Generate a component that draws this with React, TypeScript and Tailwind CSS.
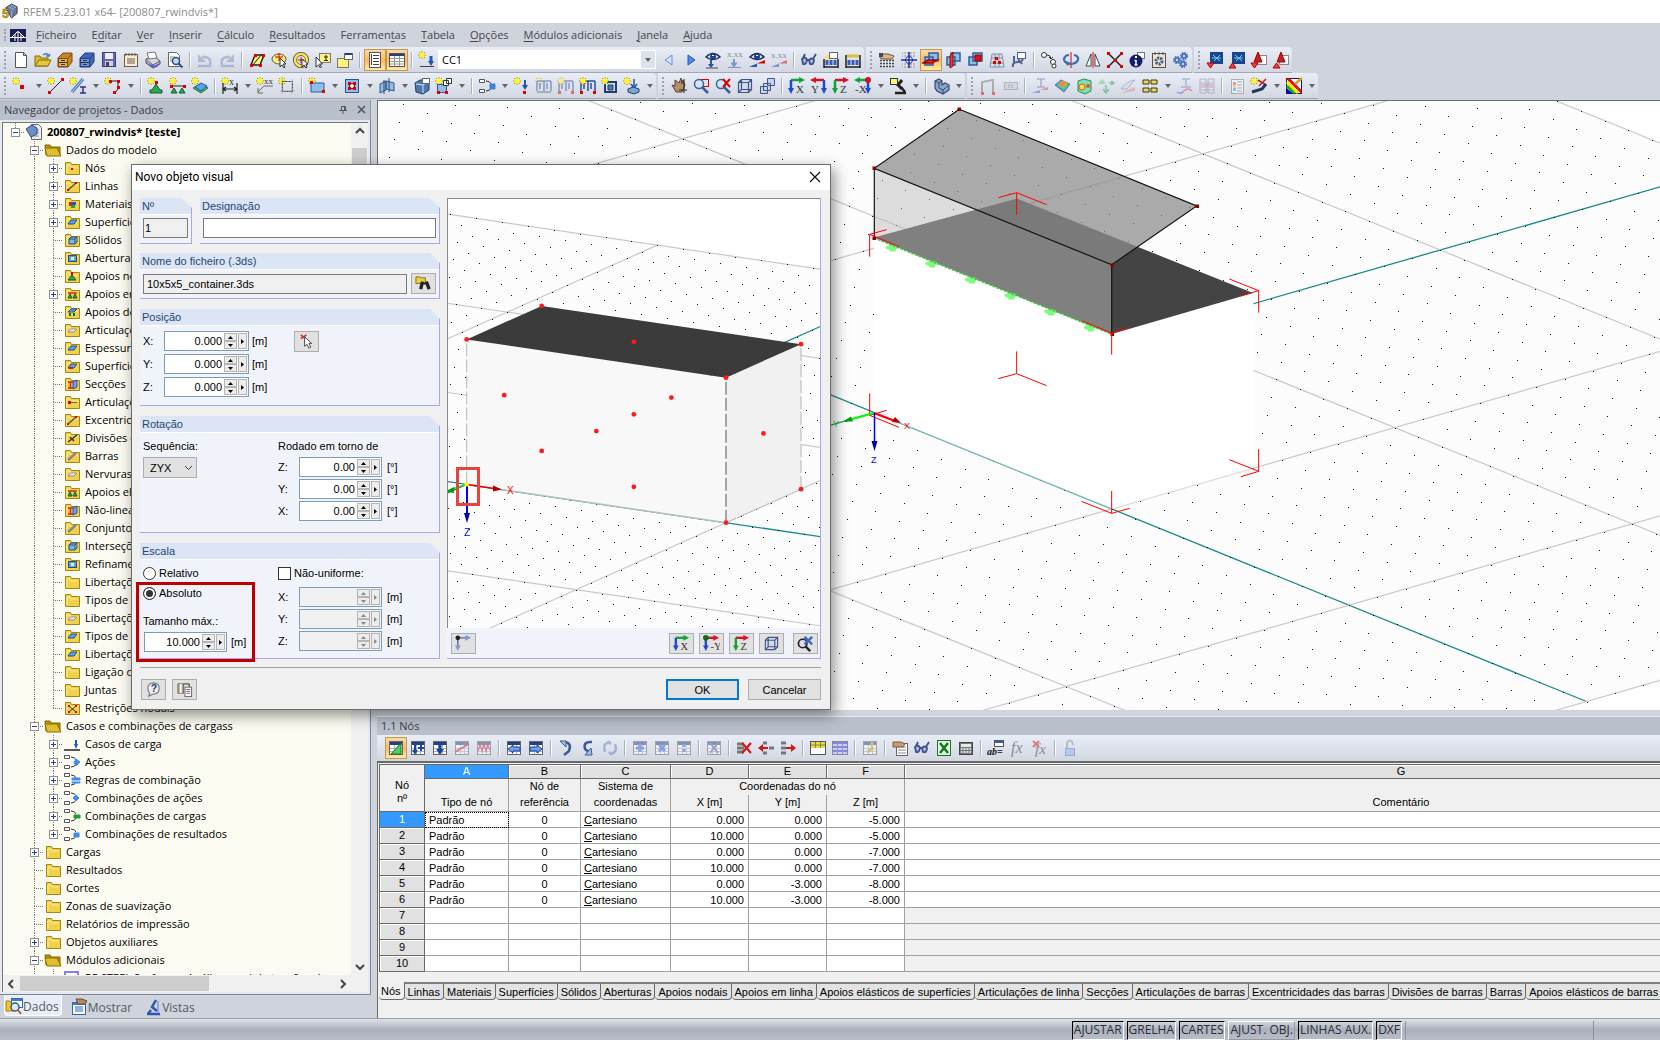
import { useState } from 'react';
import type { ReactNode } from 'react';

/* ---------- drawing helpers for the small icons (18 x 18) ---------- */

const s = (d: string, c = '#444', w = 1, f = 'none') => <path d={d} stroke={c} strokeWidth={w} fill={f} />;
const r = (x: number, y: number, w: number, h: number, f: string, c = 'none') => (
  <rect x={x} y={y} width={w} height={h} fill={f} stroke={c} />
);
const red = (x: number, y: number) => <rect x={x} y={y} width="3" height="3" fill="#e00000" />;
const star = (
  <>
    <path d="M4 0v8M0 4h8M1 1l6 6M7 1L1 7" stroke="#a39400" strokeWidth="1" />
    <path d="M4 1v6M1 4h6M2 2l4 4M6 2L2 6" stroke="#fff22e" strokeWidth="1.500" />
  </>
);
const label = (t: string, x: number, y: number, size = 10, c = '#333') => (
  <text x={x} y={y} fontSize={size} fill={c} fontFamily="'Liberation Serif', serif">{t}</text>
);
const eye = (
  <>
    {s('M2 6Q9 -1 16 6Q9 11 2 6z', '#1c2c55', 1.5, '#dce8fa')}
    <circle cx="9" cy="5.500" r="3" fill="#1f3f94" />
    {r(8, 4, 2, 1, '#fff')}
  </>
);
const glasses = (
  <>
    {s('M2 8q4-3 5 1q-1 5-4 4zM9 9q3-3 5 0q0 5-4 4zM7 9h2M3 7l2-4M13 8l3-5', '#3c5288', 1.8, '#a9bfe6')}
  </>
);
const sheet = (
  <>
    {r(2.5, 2.5, 13, 13, '#fff', '#666')}
    {r(3, 3, 12, 3, '#24407e')}
    {s('M3 9.500h12M3 12.500h12M7.500 6v9M11.500 6v9', '#aab2c0')}
  </>
);
const cabinet = (a: string, b: string, c: string) => (
  <>
    {s('M2 7l5-5h9v9l-4 5H2z', c, 1, b)}
    {s('M2.500 7.500h9v8h-9zM11.500 7.500L16 3', c, 1, a)}
    {s('M5 9.500h4M5 13.500h4M3 11.500h8', '#333')}
  </>
);
const axes = (h: string, v: string, name: string) => (
  <>
    {s('M3 3h9', h, 2.5)}
    {s('M11 0l6 3l-6 3z', h, 0, h)}
    {s('M3 3v10', v, 2.5)}
    {s('M0 11l3 6l3-6z', v, 0, v)}
    {label(name, 8, 16, 11)}
  </>
);
const axesLeft = (h: string, v: string, name: string) => (
  <>
    {s('M14 3H5', h, 2.5)}
    {s('M6 0L0 3l6 3z', h, 0, h)}
    {s('M14 3v10', v, 2.5)}
    {s('M11 11l3 6l3-6z', v, 0, v)}
    {label(name, 1, 16, 11)}
  </>
);
const plane = (
  <>
    {s('M3 6h8v8H3zM7 2h9v8H7z', '#2d5f9e', 1.5, '#8fbde8')}
  </>
);
const comb = (f: string, d: string) => (
  <>
    {s('M1.500 2.500h5v3h-5zM1.500 12.500h5v3h-5z', '#555', 1, '#fff')}
    {s('M8 4q4 0 5 3M8 14q4 0 5-3', '#333', 1)}
    {s(d, f, 1, f)}
  </>
);
const beams = s('M2 4v10M9 4v10M16 4v10M2 4h14M5 6v6M12 6v6', '#2c4fa0', 1.5);

const icons: Record<string, ReactNode> = {
  new: s('M3.500 1.500h8l3 3v12h-11zM11.500 1.500v3h3', '#555', 1, '#fff'),
  open: <>{s('M1 15V5h5l1 2h7v8z', '#8a7100', 1, '#d9b92d')}{s('M1 15l4-6h12l-3 6z', '#8a7100', 1, '#e3c63f')}{s('M9 4q4-3 6 1l1-2M15 5h-3', '#4b7cc0', 1.5)}</>,
  cab: cabinet('#f0b050', '#c98424', '#7b4d10'),
  cabBlue: cabinet('#6f97de', '#3f66b6', '#213e80'),
  save: <>{r(2.5, 1.5, 13, 14, '#6666b4', '#3d3d80')}{r(5, 2, 8, 6, '#eef')}{r(5, 10, 8, 5, '#d0d0de')}{r(6, 11, 3, 4, '#444')}</>,
  notes: <>{r(2.5, 3.5, 13, 12, '#f6eedb', '#6d5c46')}{s('M4 2v3M7 2v3M10 2v3M13 2v3M5 8h8M5 10h8M5 12h8', '#6d5c46')}</>,
  print: <>{s('M2 8l9-2l5 4l-7 4z', '#555', 1, '#d5d8e2')}{s('M5 8L3 2l8-1l2 6z', '#777', 1, '#fff')}{s('M2 8v4l7 5v-3M9 17l7-4v-3', '#555', 1, '#9da3b8')}{s('M6 14l4 2l4-2', '#5b5bd0', 2)}</>,
  preview: <>{s('M2.500 1.500h8l3 3v11h-11z', '#666', 1, '#fff')}{s('M4 6h5M4 8h4M4 10h3', '#888')}<circle cx="10" cy="10" r="3.500" fill="#bcdcf8" stroke="#30507e" strokeWidth="1.500" />{s('M12.500 12.500l4 4', '#30507e', 2)}</>,
  undo: <>{s('M6 6q10-1 8 8M2 15h13', '#7f93b6', 2.5)}{s('M2 3v8h8z', '#7f93b6', 0, '#7f93b6')}</>,
  redo: <>{s('M12 6q-10-1-8 8M3 15h13', '#7f93b6', 2.5)}{s('M16 3v8H8z', '#7f93b6', 0, '#7f93b6')}</>,
  selPoly: <>{s('M3 14L7 4h9l-4 10z', '#222', 1.5, '#fff27a')}{s('M4 15L14 3', '#222')}{red(2, 13)}{red(6, 3)}{red(14, 3)}{red(11, 13)}</>,
  selOval: <><ellipse cx="9" cy="8" rx="7" ry="5" fill="#fff27a" stroke="#555" />{s('M9 2v8M5 6h8', '#e00000')}{s('M10 7v9l2-2l2 3l1-1l-2-3h3z', '#333', 1, '#fff')}</>,
  selRing: <><circle cx="9" cy="9" r="6" fill="none" stroke="#444" strokeWidth="4" /><circle cx="9" cy="9" r="6" fill="none" stroke="#ffe34a" strokeWidth="2.500" />{s('M9 6v6M6 9h6', '#e00000')}{s('M10 8v8l2-2l2 3l1-1l-1-3h2z', '#333', 1, '#fff')}</>,
  selPlus: <>{r(5.5, 2.5, 11, 9, '#fff27a', '#777')}{s('M12 4v5M10 6h4M10 9.500h4', '#222')}{s('M2 6v10l2.500-2l2 3l1-1l-2-3h3z', '#333', 1, '#fff')}</>,
  note: <>{r(1.5, 7.5, 11, 9, '#fff27a', '#777')}{r(8.5, 2.5, 8, 6, '#fff', '#666')}{r(9, 2, 7, 2, '#24407e')}</>,
  nav: <>{r(3.5, 1.5, 11, 15, '#fff', '#555')}{s('M5.500 3v11M7 4.500h6M7 7.500h6M7 10.500h6M7 13.500h6', '#444')}</>,
  table: <>{r(1.5, 2.5, 15, 13, '#fff', '#555')}{r(2, 3, 14, 2, '#24407e')}{s('M2 7.500h14M2 10.500h14M2 13h14M6.500 5v10M11.500 5v10', '#999')}</>,
  load: <>{star}{s('M2 15.500h14', '#444')}{s('M13 5v6', '#2456b0', 3)}{s('M10 10l3 5l3-5z', '#2456b0', 0, '#2456b0')}</>,
  prev: s('M12 4L5 9l7 5z', '#6d90cc', 1, '#cfe0fa'),
  next: s('M6 4l7 5l-7 5z', '#1e5ac0', 1, '#4d8bea'),
  eyeLoad: <>{eye}{s('M7 9v5', '#2456b0', 2)}{s('M4 13l3 4l3-4z', '#2456b0', 0, '#2456b0')}{s('M2 17h12')}</>,
  valLoad: <>{label('x.xx', 1, 6, 9)}{s('M8 8v5', '#2456b0', 2)}{s('M5 12l3 4l3-4zM2 16.500h13', '#2456b0', 1, '#2456b0')}</>,
  eyeRes: <>{eye}{s('M1 16L9 12.500V16z', '#2456b0', 0, '#2456b0')}{s('M9 12.500L17 9v3.500z', '#e00000', 0, '#e00000')}</>,
  valRes: <>{label('x.xx', 1, 7, 9)}{s('M1 16L9 12.500V16z', '#2456b0', 0, '#2456b0')}{s('M9 12.500L17 9v3.500z', '#e00000', 0, '#e00000')}</>,
  glasses,
  film: <>{r(7.5, 1.5, 8, 6, '#fff', '#666')}{s('M2 8v9M16 8v9M2 16h14', '#222', 1.5)}{s('M5 9v5M9 9v5M13 9v5', '#3a5fb0', 3)}{s('M3 6h4', '#ffe34a', 3)}</>,
  film2: <>{s('M2 4v13M16 4v13M2 16h14', '#222', 1.5)}{s('M5 9v5M9 9v5M13 9v5', '#3a5fb0', 3)}{s('M3 5h12', '#d8c23a', 3)}</>,
  hand: <>{s('M2 9.500h14M2 12.500h14M2 15.500h14', '#444', 1.5)}{s('M4.500 9v8M7.500 9v8M10.500 9v8M13.500 9v8', '#e2e6ef', 1)}{s('M2 3h8l6 2l-2 3H6L2 7z', '#7d5b3b', 1, '#d9b391')}{r(1, 2, 4, 4, '#4a4a55')}</>,
  snap: <>{s('M2 2h14M2 5h14M2 13h14M2 16h14', '#777', 1)}{s('M3.500 1v16M6.500 1v16M12.500 1v16M15.500 1v16', '#e2e6ef', 1.5)}<circle cx="9" cy="9" r="3.500" fill="#fff" stroke="#1d2fa8" />{s('M9 1v16M1 9h16', '#1d2fa8', 1.5)}</>,
  planeXY: <>{plane}{s('M1 12l5-3h9l-5 3z', '#a00000', 1.5, '#e04030')}</>,
  planeYZ: <>{plane}{s('M9 1v14l-3 2V5z', '#a00000', 1, '#e04030')}</>,
  planeXZ: <>{plane}{s('M9 4h6v6H9z', '#a00000', 1, '#e01010')}</>,
  mesh: <>{s('M4 3h10l2 13H2zM3 7h12M2 12h14M7 3v13M11 3v13', '#7a93ab', 1, '#d6e2ee')}{red(7, 6)}{red(5, 10)}{red(10, 10)}</>,
  tools: <>{s('M3 16q-1-5 5-5t4-5', '#4d6189', 2)}{s('M4 5v6M8 8l4 5', '#4d6189', 2)}{r(7.5, 1.5, 8, 6, '#fff', '#4d6189')}</>,
  move: <><circle cx="4" cy="4" r="2.500" fill="#fff" stroke="#333" /><circle cx="13" cy="11" r="2.500" fill="#fff" stroke="#333" /><circle cx="14" cy="15" r="2" fill="#fff" stroke="#333" />{s('M7 4q4 0 4 4M9 6l2 2l2-2', '#333')}</>,
  rotate: <>{s('M9 1v16', '#e00000')}{s('M12 4q5 1 4 5q-2 4-8 4q-6-1-6-5q1-4 5-4', '#3b6db4', 2.2)}{s('M5 15l4-3l-5-2z', '#3b6db4', 0, '#3b6db4')}</>,
  mirror: <>{s('M9 1v16', '#e00000')}{s('M7 3v12H2zM11 3v12h5z', '#444', 1, '#fff')}</>,
  cross: <>{s('M3 3l12 12M15 3L3 15', '#222', 1.5)}{red(1, 1)}{red(14, 1)}{red(1, 14)}{red(14, 14)}{red(8, 8)}</>,
  info: <>{r(9.5, 1.5, 7, 6, '#fff', '#777')}<circle cx="8" cy="10" r="6.500" fill="#111d68" />{s('M8 9v5M6.500 9.500h2M6.500 14h3', '#fff', 1.5)}{r(7, 5, 2, 2, '#fff')}</>,
  gearBox: <>{r(2.5, 2.5, 13, 14, '#efe3cc', '#555')}{s('M5 1v3M9 1v3M13 1v3', '#555')}<circle cx="9" cy="10" r="3" fill="none" stroke="#35588f" strokeWidth="3" strokeDasharray="2 1" /></>,
  gears: (
    <>
      {[[5, 9], [12, 5], [11, 13]].map(([x, y]) => (
        <g key={y}>
          <circle cx={x} cy={y} r="3" fill="none" stroke="#466db5" strokeWidth="2" strokeDasharray="1.500 0.850" />
          <circle cx={x} cy={y} r="2" fill="#c8d6f0" stroke="#466db5" strokeWidth="1.500" />
        </g>
      ))}
    </>
  ),
  dxfIn: <>{r(4, 1, 13, 12, '#16468c')}{s('M7 4l7 6M14 4l-6 6M6 7h9', '#7fd0f2')}{s('M1 12h7l-3.500 5z', '#b00000', 1, '#f04040')}</>,
  dxfOut: <>{r(4, 1, 13, 12, '#16468c')}{s('M7 4l7 6M14 4l-6 6M6 7h9', '#7fd0f2')}{s('M1 17h7l-3.500-5z', '#b00000', 1, '#f04040')}</>,
  pdfIn: <>{r(7.5, 4.5, 9, 9, '#fff', '#888')}{s('M8 1l4 10H4z', '#a00000', 1, '#c81e1e')}{s('M1 12h7l-3.500 5z', '#b00000', 1, '#f04040')}</>,
  pdfOut: <>{r(7.5, 4.5, 9, 9, '#fff', '#888')}{s('M9 1l4 10H5z', '#a00000', 1, '#c81e1e')}{s('M1 17h7l-3.500-5z', '#b00000', 1, '#f04040')}</>,

  node: <>{star}{r(8, 8, 4, 4, '#e00000')}</>,
  line: <>{star}{s('M3 15L15 3', '#222')}{red(1, 14)}{red(14, 1)}</>,
  member: <>{star}{s('M3 15L14 2', '#3973bd', 3)}{s('M3 15L14 2', '#cfe3fa', 1)}{s('M11 10h6M14 10v6M11 16h6', '#33337e', 1.5)}</>,
  poly: <>{star}{s('M6 4h8v8l-3 4', '#222')}{red(5, 3)}{red(13, 3)}{red(13, 9)}{red(9, 14)}</>,
  support: <>{star}{s('M9 7l4 6h2v3H3v-3h2z', '#12612a', 1, '#2ea650')}{red(8, 4)}</>,
  lineSupport: <>{star}{s('M3 9h13', '#222')}{red(1, 8)}{red(14, 8)}{s('M5 11l3 5H2zM13 11l3 5h-6z', '#12612a', 1, '#2ea650')}</>,
  surfSupport: <>{star}{s('M2 11l7-4l8 4l-7 5z', '#1c7b35', 1, '#3cc060')}{s('M4 10l6-4l6 3l-6 5z', '#1b57a0', 1, '#5aa2ee')}</>,
  dim: <>{star}{s('M2 6v11M16 6v11M2 12h14M5 10l-3 2l3 2M13 10l3 2l-3 2', '#222', 1.2)}{label('x', 8, 8, 10)}</>,
  dimXX: <>{star}{label('xx', 8, 7, 9)}{s('M2 15L8 9h9M2 11v5h5', '#666')}</>,
  frame: <>{star}<rect x="4.500" y="4.500" width="10" height="10" fill="none" stroke="#333" strokeDasharray="2 1" />{s('M4 2v15M14 2v15M2 14h15', '#888', 0.5)}</>,
  surface: <>{star}{s('M3 6h13v9H3z', '#2d5f9e', 1, '#8fbde8')}{red(2, 4)}{red(14, 13)}</>,
  opening: <>{r(2.5, 2.5, 13, 13, '#8fbde8', '#35537f')}{r(6.5, 6.5, 5, 5, '#dce6f2', '#333')}{red(5, 5)}{red(10, 5)}{red(5, 10)}{red(10, 10)}</>,
  inter: <>{s('M2 7l6-3v9l-6 3zM8 4l8 2v8l-8-2z', '#35537f', 1, '#8fbde8')}{s('M11 1v14M6 3v14', '#2a4a78')}</>,
  solid: <>{s('M2 6l5-3h9v10l-6 4l-7-2z', '#213e68', 1, '#4d78ae')}{s('M3 7l7 1v8M10 8l6-4', '#cfe3fa')}{r(9.5, 1.5, 7, 5, '#fff', '#666')}</>,
  solidNew: <>{star}{r(2.5, 7.5, 9, 8, '#8fbde8', '#2d5f9e')}{s('M8.500 3.500h5v5h-5zM11.500 1.500h5v5h-5z', '#333', 1, '#fff')}{red(2, 14)}{red(10, 14)}</>,
  combo: comb('#3a84dc', 'M12 7h5v5h-5z'),
  nodeLoad: <>{star}{s('M12 3v7', '#2456b0', 2)}{s('M9 8l3 5l3-5z', '#2456b0', 0, '#2456b0')}{red(10, 14)}</>,
  memLoad: <>{star}{beams}{s('M2 15h14', '#222')}</>,
  surfLoad: <>{beams}{star}{red(1, 14)}{red(14, 14)}</>,
  solidLoad: <>{s('M4 5h11v10H4z', '#213e68', 2, '#cfe3fa')}{s('M7 8h5v5H7z', '#213e68', 1, '#4d78ae')}{star}</>,
  genLoad: <>{star}{s('M11 2v7M8 7l3 4l3-4', '#2456b0', 1.5)}{s('M5 12l5-2l6 2v3l-5 2l-6-2z', '#213e68', 1, '#7ba6da')}</>,
  pan: <>{s('M5 3v6l-3-1l4 7h6l3-7l-2-5l-1 4l-1-6l-2 5z', '#59402c', 1, '#b58e6b')}{s('M14 2v14M9 13h8', '#222')}</>,
  zoomWin: <>{r(8.5, 2.5, 8, 7, 'none', '#e00000')}<circle cx="7" cy="7" r="4.500" fill="#d3e6fb" stroke="#3a5d9e" strokeWidth="1.500" />{s('M10 10l6 6', '#3a5d9e', 2.5)}</>,
  zoomDel: <><circle cx="7" cy="7" r="4.500" fill="#d3e6fb" stroke="#3a5d9e" strokeWidth="1.500" />{s('M10 10l6 6', '#3a5d9e', 2.5)}{s('M9 2l7 8M16 2L9 10', '#e00000', 2)}</>,
  box: <>{s('M2.500 5.500h10v10h-10zM5.500 2.500h10v10h-10zM2.500 5.500l3-3M12.500 5.500l3-3M12.500 15.500l3-3M2.500 15.500l3-3', '#3f5489', 1.2, '#c5d3ec77')}</>,
  boxes: <>{s('M2.500 9.500h7v7h-7zM5.500 6.500h7v7h-7zM9.500 1.500h7v7h-7z', '#3f5489', 1, '#c5d3ec')}</>,
  ax: axes('#12a23a', '#2348d0', 'X'),
  ay: axesLeft('#d81224', '#2348d0', 'Y'),
  ay2: <>{axes('#d81224', '#2348d0', '-Y')}<circle cx="3" cy="3" r="3" fill="#0f6a20" /></>,
  az: axes('#d81224', '#12a23a', 'Z'),
  anx: <>{axesLeft('#12a23a', '#2348d0', '-X')}<circle cx="14" cy="3" r="3" fill="#d81224" /></>,
  view: <>{s('M13 3l-4 5l4 4', '#222', 3)}{s('M6 16h11M12 10l4 5', '#222', 2.5)}{r(1.5, 1.5, 7, 6, '#fff27a', '#333')}</>,
  shape: <>{s('M3 4l4-2l3 2v4l3-2l4 2v5l-6 4l-6-3l-2-3z', '#34496e', 1.2, '#8ba7cd')}{s('M3 4l4 2v5l4 2v4M7 6l3-2M11 13l5-4', '#34496e')}</>,
  deform: <>{s('M3 16V5l11-2v13', '#777', 2)}{red(2, 15)}{red(13, 15)}</>,
  tag: <>{r(3.5, 5.5, 13, 7, '#ccc', '#888')}{s('M8 7v4M11 7v4', '#777')}</>,
  secForce: <>{s('M6 2h8M10 2v8M6 10h8', '#6b7fb5', 1.5)}{s('M1 16L9 13v3z', '#4a63d0', 0, '#4a63d0')}{s('M9 13l8-3v3z', '#e05050', 0, '#e05050')}</>,
  rainbow: <>{s('M2 8l6-5l9 4l-6 8z', '#6a6ad0', 1, '#5a9af0')}{s('M4 8l5-4l7 3l-5 6z', '#40c060', 1, '#60d070')}{s('M6 7l4-3l4 2l-4 4z', '#f0a030', 1, '#f08050')}</>,
  iso: <>{s('M3 4l6-2l7 2v10l-6 3l-7-3z', '#2a8e5a', 1, '#7be0b4')}<circle cx="7" cy="10" r="3" fill="#f3e14a" stroke="#e05a2a" /><circle cx="13" cy="9" r="2" fill="#e05a2a" /></>,
  react: <>{s('M9 8v8M6 12l3 4l3-4M12 6h5M14 4l3 2l-3 2', '#35a04a', 1.5)}{s('M5 2l4 5H1z', '#35a04a', 0, '#6fce80')}</>,
  section: <>{s('M2 12Q8 4 16 3l-8 9z', '#8090ad', 1, '#cfdaee')}{s('M2 16l14-6v4z', '#c04848', 0, '#e88a8a')}</>,
  keys: <>{s('M2 3h6v4H2zM10 3h6v4h-6zM2 11h6v4H2zM10 11h6v4h-6z', '#3e3500', 1, '#e8d86a')}</>,
  curve: <>{s('M6 2h8M10 2v8M5 10h10', '#7a8cc0', 1.5)}{s('M1 15q4 3 7-1', '#5a5ad8', 1.5)}{s('M8 14q4-4 8 0', '#d84a5a', 1.5)}</>,
  grid: <>{s('M2 2h6v14H2zM10 2h6v14h-6zM2 6h14M2 10h14M2 13h14', '#8a8a98', 1, '#dfe0ff')}{s('M3 8h12', '#e04a4a')}</>,
  report: <>{r(3.5, 2.5, 12, 14, '#fff', '#777')}{s('M9 5h5M9 8h5M9 11h5M9 14h5', '#777')}{r(5, 5, 3, 3, '#e05050')}{r(5, 8, 3, 3, '#e8d040')}{r(5, 11, 3, 3, '#40a0e0')}</>,
  wand: <>{star}{s('M8 3l8 5M16 2L9 9', '#c02020', 1.5)}{s('M2 15l10-3l4-5', '#22375e', 3)}</>,
  colors: <>{r(1.5, 1.5, 15, 15, '#f4f4ff', '#222')}{s('M2 12v4h5z', '#0000e0', 1, '#0000e0')}{s('M2 9l8 7', '#10b020', 3)}{s('M2 5l11 11', '#ffe800', 3)}{s('M2 2h3l11 11v3z', '#e81010', 1, '#e81010')}{s('M10 7l7-6', '#d8a030', 2.5)}</>,

  tEdit: <>{sheet}{s('M14 4v11H4z', '#0e7a22', 1, '#4ccf62')}</>,
  tPlus: <>{sheet}{s('M6 4v9M4 11l2 3l2-3M12 6v6M9 9h6', '#17459e', 2)}</>,
  tDown: <>{sheet}{s('M9 3v9', '#17459e', 3)}{s('M5 10l4 6l4-6z', '#17459e', 0, '#17459e')}</>,
  tRes: <>{sheet}{s('M2 13L16 5', '#d81224', 2)}</>,
  tWave: <>{sheet}{s('M3 12l2-6l2 6l2-7l2 7l2-6l2 5', '#d81224', 1.2)}</>,
  tPrev: <>{sheet}{s('M3 10l5-4v2h7v4H8v2z', '#17459e', 1, '#6f9dea')}</>,
  tNext: <>{sheet}{s('M15 10l-5-4v2H3v4h7v2z', '#17459e', 1, '#6f9dea')}</>,
  back: <>{s('M8 3q7 1 4 9l-5 4', '#3a5b94', 2.5)}{s('M3 2h6v6z', '#3a5b94', 1, '#a9bfe6')}</>,
  fwd: <>{s('M13 3q-9-1-7 7l5 4', '#3a5b94', 2.5)}{s('M6 16h7l-1-7z', '#3a5b94', 1, '#a9bfe6')}</>,
  sync: s('M4 13q-3-8 4-10l2 2M14 5q3 8-4 10l-2-2', '#6c87bb', 2.5),
  tAdd: <>{sheet}{s('M9 5v8M5 9h8', '#3a63d8', 3)}</>,
  tStar: <>{sheet}{s('M6 6l6 6M12 6l-6 6', '#3a63d8', 3)}</>,
  tDots: <>{sheet}{s('M9 5v3M9 10v3', '#3a63d8', 3)}</>,
  tX: <>{sheet}{s('M5 4l8 10M13 4L5 14', '#4a63b0', 2)}</>,
  rowDel: <>{s('M2 5h7M2 9h7M2 13h7', '#777', 3)}{s('M7 4l9 10M16 4L7 14', '#d01818', 2.2)}</>,
  rowIn: <>{s('M6 4h4M6 14h4M12 9h5', '#777', 3)}{s('M11 9H4', '#d01818', 2)}{s('M6 5L1 9l5 4z', '#d01818', 0, '#d01818')}</>,
  rowOut: <>{s('M2 4h5M2 9h5M2 14h5', '#777', 3)}{s('M7 9h7', '#d01818', 2)}{s('M12 5l5 4l-5 4z', '#d01818', 0, '#d01818')}</>,
  tYellow: <>{r(1.5, 2.5, 15, 13, '#fff', '#555')}{r(2, 3, 14, 6, '#e6db50')}{s('M2 6h14M6.500 3v6M11.500 3v6', '#8c8430')}</>,
  tBlue: <>{r(1.5, 2.5, 15, 13, '#c7cbff', '#889')}{s('M2 4h14M2 8h14M2 12h14', '#6c72e0', 1.5)}{s('M6.500 3v12M11.500 3v12', '#99a')}</>,
  tPen: <>{sheet}{s('M11 3v7l-5 3', '#c9a400', 2.5)}</>,
  tList: <>{r(5.5, 4.5, 11, 12, '#fff', '#666')}{s('M7 8h8M7 11h8M7 14h8', '#888')}{s('M2 3h8l4 2l-2 3H2z', '#7d5b3b', 1, '#c79d78')}</>,
  excel: <>{r(2.5, 1.5, 13, 15, '#e6f5e3', '#137a1d')}{s('M5 4l8 10M13 4L5 14', '#137a1d', 2.5)}</>,
  calc: <>{r(2.5, 3.5, 13, 12, '#777', '#444')}{r(4, 5, 10, 3, '#e0eee0')}{s('M4 10h10M4 13h10', '#fff', 1.5)}{s('M6 9v5M9 9v5M12 9v5', '#777')}</>,
  ab: <>{r(7.5, 1.5, 9, 6, '#fff', '#555')}{r(8, 2, 8, 2, '#3a5fa8')}<text x="0" y="16" fontSize="10" fontWeight="bold" fontStyle="italic" fill="#111" fontFamily="'Liberation Serif', serif">ab=</text></>,
  fx: <text x="2" y="14" fontSize="16" fontStyle="italic" fill="#333" fontFamily="'Liberation Serif', serif">fx</text>,
  fxDel: <><text x="4" y="15" fontSize="15" fontStyle="italic" fill="#333" fontFamily="'Liberation Serif', serif">fx</text>{s('M2 2l6 6M8 2L2 8', '#d01818', 2)}</>,
  lock: <>{s('M6 9V5q0-4 4-3q2 1 2 4', '#8894ab', 2)}{r(4.5, 9.5, 9, 7, '#8fb0f5', '#5d7cc0')}</>,

  find: <>{s('M1 9V2h4l1 1h5v6z', '#8a7100', 1, '#e8cf4a')}{s('M8 7l-2 8M12 7l3 8', '#222', 3.5)}{s('M8 9h5', '#222', 2)}</>,
  pick: <>{s('M3 2l6 5M9 2L3 6', '#d03030', 1.8)}{s('M7 4v10l2.500-2l2 4l2-1l-2-4h3z', '#444', 1, '#fff')}</>,
  help: <>{s('M3 8q0-6 6-6t6 6t-7 6l-4 2l1-3q-2-2-2-5z', '#777', 1.2, '#eee')}<text x="6" y="12" fontSize="11" fontWeight="bold" fill="#1d3a8a" fontFamily="'Liberation Sans', sans-serif">?</text></>,
  comment: <>{s('M2 3h6v10H2z', '#666', 1, '#b9a58a')}{s('M5 3v10', '#fff', 2)}{s('M8 3h6M14 3v3', '#555', 1.5)}{r(9.5, 6.5, 7, 10, '#fff', '#666')}{s('M11 9h4M11 11h4M11 13h4', '#666')}</>,
  origin: <>{s('M3 3h9M3 3v10', '#4d6aa6', 1.5)}{s('M11 0l6 3l-6 3zM0 11l3 6l3-6z', '#4d6aa6', 0, '#7e9ad0')}<circle cx="3" cy="3" r="2.500" fill="#222" /></>,
  zoomAll: <><circle cx="6" cy="9" r="4.500" fill="#dde" stroke="#222" strokeWidth="1.800" />{s('M9 12l5 5', '#222', 2.5)}{s('M8 2l8 8M16 2L8 10', '#4065c0', 2.5)}</>,

  tabData: <>{s('M1 14V4h4l1 2h3v8z', '#a98600', 1, '#f1c62c')}{r(6.5, 1.5, 11, 9, '#fff', '#2b65c8')}{r(7, 2, 10, 2, '#3b7be0')}<circle cx="10" cy="10" r="4" fill="#d8ebfc" stroke="#3c5578" strokeWidth="1.500" />{s('M13 13l3 4', '#a06a30', 2)}</>,
  tabShow: <>{r(2.5, 4.5, 13, 12, '#fff', '#2b65c8')}{s('M5 9h8M5 11h8M5 13h8', '#2b65c8')}{r(3, 5, 12, 2, '#3b7be0')}{s('M6 1h6l5 2l-2 3H8z', '#6b4c30', 1, '#b58a64')}</>,
  tabViews: <>{s('M12 2l-4 7l5 4M3 16h13M7 12l-3 4', '#2c56b8', 2.5)}{s('M14 3v11', '#6f9dea', 1.5)}</>,
};

function Icon({ name, size = 18 }: { name: string; size?: number }) {
  return (
    <svg width={size} height={size} viewBox="0 0 18 18" fill="none" className="shrink-0" aria-hidden="true">
      {icons[name]}
    </svg>
  );
}

/* ---------- toolbars: "|" separator, "v" drop arrow, "*" pressed, "-" greyed ---------- */

const mainBarA = 'new open cab cabBlue save notes print preview | -undo -redo | selPoly selOval selRing selPlus note | *nav *table | load';
const mainBarB = 'prev next eyeLoad -valLoad eyeRes -valRes | glasses film film2';
const mainBarC = 'hand snap *planeXY planeYZ planeXZ mesh tools | move rotate mirror cross info gearBox gears';
const mainBarD = 'dxfIn dxfOut pdfIn pdfOut';
const secondBarA =
  'node v line member v poly v | support lineSupport surfSupport | dim v dimXX frame | surface v opening v inter v solid solidNew v | combo v nodeLoad -memLoad -surfLoad surfLoad solidLoad genLoad v';
const secondBarB = 'pan zoomWin zoomDel box boxes | ax ay az anx v view v | shape v';
const secondBarC = '-deform -tag | -secForce rainbow iso -react -section keys v -curve -grid | -report wand v colors v';
const tableBar =
  '*tEdit tPlus tDown -tRes -tWave | tPrev tNext | back fwd -sync | -tAdd -tStar -tDots | -tX | rowDel rowIn rowOut | tYellow tBlue | -tPen | tList glasses excel calc | ab -fx -fxDel | -lock';

function Tools({ items }: { items: string }) {
  return (
    <>
      {items.split(' ').map((item, i) => {
        if (item === '|') return <span key={i} className="mx-[3px] h-4 w-[2px] shrink-0 border-l border-[#a9b0bf] bg-white" />;
        if (item === 'v')
          return (
            <button key={i} aria-label="Mais" className="flex h-[22px] w-[13px] shrink-0 items-center justify-center">
              <svg width="6" height="4" viewBox="0 0 6 4"><path d="M0 0h6L3 4z" fill="#666" /></svg>
            </button>
          );
        const pressed = item[0] === '*';
        const faded = item[0] === '-';
        const name = pressed || faded ? item.slice(1) : item;
        return (
          <button
            key={i}
            aria-label={name}
            className={`flex h-[22px] w-[22px] shrink-0 items-center justify-center ${faded ? 'opacity-50' : ''} ${
              pressed ? 'border border-[#c09a55] bg-linear-to-b from-[#fbd9a8] via-[#fdb75c] to-[#ffe9a6]' : ''
            }`}
          >
            <Icon name={name} />
          </button>
        );
      })}
    </>
  );
}

function Bar({ children }: { children: ReactNode }) {
  return (
    <div className="mr-[2px] flex h-[26px] items-center rounded-tr border-b border-[#a2a8b5] bg-linear-to-b from-[#e9edf6] to-[#d3d7e2]">
      <span className="mr-1 ml-1 h-[18px] w-[2px] shrink-0 border-l-2 border-dotted border-[#9aa1b0]" />
      {children}
    </div>
  );
}

const menus: [string, number][] = [
  ['Ficheiro', 0], ['Editar', 1], ['Ver', 0], ['Inserir', 0], ['Cálculo', 0], ['Resultados', 0], ['Ferramentas', 8],
  ['Tabela', 0], ['Opções', 0], ['Módulos adicionais', 0], ['Janela', 0], ['Ajuda', 0],
];

/* ---------- project tree ---------- */

type Row = { text: string; level: number; box?: '+' | '-'; icon: string; bold?: boolean; last?: boolean };

const model: [string, string, ('+' | '-')?][] = [
  ['Nós', 'dot', '+'], ['Linhas', 'diag', '+'], ['Materiais', 'rgb', '+'], ['Superfícies', 'surf', '+'], ['Sólidos', 'cube'],
  ['Aberturas', 'hole'], ['Apoios nodais', 'sup'], ['Apoios em linha', 'sups', '+'], ['Apoios de superfícies', 'ssup'],
  ['Articulações de linha', 'hinge'], ['Espessuras variáveis', 'surf'], ['Superfícies ortotrópicas', 'ortho'], ['Secções', 'sec'],
  ['Articulações de barras', 'mh'], ['Excentricidades das barras', 'diag'], ['Divisões de barras', 'div'], ['Barras', 'bar'],
  ['Nervuras', 'hinge'], ['Apoios elásticos de barras', 'sups'], ['Não-linearidades', 'sec'], ['Conjuntos de barras', 'bar'],
  ['Interseções de superfícies', 'cube'], ['Refinamentos da malha', 'hole'], ['Libertações nodais', 'plain'],
  ['Tipos de libertações', 'plain'], ['Libertações de linha', 'hinge'], ['Tipos de libertações', 'surf'],
  ['Libertações de superfície', 'surf'], ['Ligação de barras', 'plain'], ['Juntas', 'plain'], ['Restrições nodais', 'xx'],
];

const rows: Row[] = [
  { text: '200807_rwindvis* [teste]', level: 0, box: '-', icon: 'project', bold: true },
  { text: 'Dados do modelo', level: 1, box: '-', icon: 'opened' },
  ...model.map(([text, icon, box], i) => ({ text, icon, box, level: 2, last: i === model.length - 1 })),
  { text: 'Casos e combinações de cargass', level: 1, box: '-', icon: 'opened' },
  { text: 'Casos de carga', level: 2, box: '+', icon: 'case' },
  { text: 'Ações', level: 2, box: '+', icon: 'c1' },
  { text: 'Regras de combinação', level: 2, box: '+', icon: 'c2' },
  { text: 'Combinações de ações', level: 2, box: '+', icon: 'c3' },
  { text: 'Combinações de cargas', level: 2, box: '+', icon: 'c4' },
  { text: 'Combinações de resultados', level: 2, box: '+', icon: 'c5', last: true },
  { text: 'Cargas', level: 1, box: '+', icon: 'plain' },
  { text: 'Resultados', level: 1, icon: 'plain' },
  { text: 'Cortes', level: 1, icon: 'plain' },
  { text: 'Zonas de suavização', level: 1, icon: 'plain' },
  { text: 'Relatórios de impressão', level: 1, icon: 'plain' },
  { text: 'Objetos auxiliares', level: 1, box: '+', icon: 'plain' },
  { text: 'Módulos adicionais', level: 1, box: '-', icon: 'opened' },
  { text: 'RF-STEEL Surfaces - Análise geral de tensões de', level: 2, icon: 'module' },
];

const folderMarks: Record<string, ReactNode> = {
  dot: r(8, 9, 2, 2, '#e00000'),
  diag: <>{s('M5 13L13 6', '#555', 1.5)}{r(4, 12, 2, 2, '#e00000')}{r(12, 5, 2, 2, '#e00000')}</>,
  rgb: <>{r(6, 7, 3, 4, '#d02020')}{r(9, 7, 4, 3, '#2a50c0')}{r(8, 10, 4, 3, '#28a040')}</>,
  surf: s('M5 11l3-4h6l-3 4z', '#20508c', 1, '#5aa2ee'),
  ortho: <>{s('M5 11l3-4h6l-3 4z', '#20508c', 1, '#5aa2ee')}{s('M6 11h4', '#d02020', 2)}</>,
  cube: s('M6 8h6v5H6zM6 8l2-2h6l-2 2M14 6v5l-2 2', '#20508c', 1, '#7fb4ea'),
  hole: <>{r(5.5, 6.5, 8, 6, '#5aa2ee', '#20508c')}{r(8, 8, 3, 3, '#f6e9a0')}</>,
  sup: <>{s('M9 8l4 5H5z', '#12612a', 1, '#2ea650')}{r(8, 5, 2, 3, '#e00000')}</>,
  sups: <>{s('M7 9l2 4H5zM12 9l2 4h-4z', '#12612a', 1, '#2ea650')}{s('M5 8h9', '#d02020', 1.5)}</>,
  ssup: <>{s('M5 9l3-3h6l-3 3z', '#20508c', 1, '#5aa2ee')}{s('M7 10v3M11 10v3', '#15702c', 2)}</>,
  hinge: s('M5 11l3-3h6l-3 3z', '#8b8b9b', 1, '#eef'),
  sec: <>{s('M5 7h5M5 13h5M7.500 7v6', '#d02020', 1.5)}{s('M10 7l4-2v7l-4 2z', '#2a50c0', 1, '#6f9dea')}</>,
  mh: <>{s('M8 9.500h6', '#666')}{red(5, 8)}</>,
  div: s('M5 13L14 6M7 8l4 4', '#333', 1.5),
  bar: s('M5 13L13 6', '#888', 2.5),
  xx: <>{s('M6 7l7 6M13 7l-7 6', '#333', 1)}{r(5, 6, 2, 2, '#e00000')}{r(12, 6, 2, 2, '#e00000')}{r(5, 12, 2, 2, '#e00000')}{r(12, 12, 2, 2, '#e00000')}</>,
};

const treeIcons: Record<string, ReactNode> = {
  project: <>{s('M6.500 1.500h7l3 3v12h-10z', '#666', 1, '#eee')}{s('M9 7h5M9 10h5M9 13h5', '#888')}{s('M1 6l6-4l5 3v6l-6 3z', '#2c4a84', 1, '#6f8fc4')}</>,
  opened: <>{s('M2 14L1 4h5l1 2h9v8z', '#7f6500', 1, '#b8960f')}{s('M3 15L1 7h12l4 8z', '#8a7100', 1, '#e0be32')}</>,
  case: <>{s('M1 15h16', '#222', 1.5)}{s('M13 5v5', '#2456b0', 2)}{s('M11 9l2 5l2-5z', '#2456b0', 0, '#2456b0')}</>,
  c1: comb('#3f8cf0', 'M13 6l4 3l-4 4l-2-3z'),
  c2: comb('#3f8cf0', 'M9 7h8v2H9zM9 11h8v1H9z'),
  c3: comb('#3f8cf0', 'M13 6l3 3l-3 3l-3-3z'),
  c4: comb('#16a030', 'M11 8h6v3h-6z'),
  c5: comb('#3f8cf0', 'M11 8h5v4h-5z'),
  module: <>{r(2, 3, 13, 13, '#fff')}{s('M2 16V3h13v13', '#8080ff', 2)}</>,
};

function TreeIcon({ name }: { name: string }) {
  return (
    <svg width="18" height="18" viewBox="0 0 18 18" fill="none" className="shrink-0" aria-hidden="true">
      {treeIcons[name] ?? (
        <>
          {s('M2.500 15.500v-12h5l1 2h8v10z', '#a58614', 1, '#efd14a')}
          {s('M4 14V6h3l1 2h7', '#fbeb9a', 1)}
          {folderMarks[name]}
        </>
      )}
    </svg>
  );
}

function Guide({ line, top, bottom, tick, box }: { line?: boolean; top?: boolean; bottom?: boolean; tick?: boolean; box?: '+' | '-' }) {
  return (
    <svg width="19" height="18" className="shrink-0" aria-hidden="true" shapeRendering="crispEdges">
      {(line || top) && <path d="M9.500 0v9" stroke="#777" strokeDasharray="1 1" />}
      {(line || bottom) && <path d="M9.500 9v9" stroke="#777" strokeDasharray="1 1" />}
      {tick && <path d="M9 9.500h10" stroke="#777" strokeDasharray="1 1" />}
      {box && <rect x="5.500" y="5.500" width="8" height="8" fill="#fff" stroke="#919191" />}
      {box && <path d="M7 9.500h5" stroke="#26429a" />}
      {box === '+' && <path d="M9.500 7v5" stroke="#26429a" />}
    </svg>
  );
}

function TreeRow({ row }: { row: Row }) {
  return (
    <li className="flex h-[18px] shrink-0 items-center whitespace-nowrap">
      {row.level === 0 && <Guide top tick box={row.box} />}
      {row.level === 1 && <><Guide /><Guide line tick box={row.box} /></>}
      {row.level === 2 && <><Guide /><Guide line /><Guide top bottom={!row.last} tick box={row.box} /></>}
      <TreeIcon name={row.icon} />
      <span className={`ml-1 ${row.bold ? 'font-bold' : ''}`}>{row.text}</span>
    </li>
  );
}

function Arrow({ dir }: { dir: 'up' | 'down' | 'left' | 'right' }) {
  const d = { up: 'M1 6l4-4l4 4', down: 'M1 3l4 4l4-4', left: 'M6 1L2 5l4 4', right: 'M3 1l4 4l-4 4' }[dir];
  return (
    <button aria-label={dir} className="flex h-[17px] w-[17px] shrink-0 items-center justify-center">
      <svg width="10" height="10"><path d={d} stroke="#444" strokeWidth="2" fill="none" /></svg>
    </button>
  );
}

function Navigator() {
  return (
    <aside className="flex w-[371px] shrink-0 flex-col">
      <div className="flex h-5 shrink-0 items-center border-r border-[#8e95a3] bg-[#b9c0cb] pl-1 text-[#3c3c44]">
        <span className="flex-1">Navegador de projetos - Dados</span>
        <button aria-label="Fixar" className="mr-2 p-px">
          <svg width="8" height="8"><path d="M1.500 4.500h5v-4h-4v4M0 4.500h8M4 5v3M5.500 1v3" stroke="#555" fill="none" /></svg>
        </button>
        <button aria-label="Fechar" className="mr-[2px] p-px">
          <svg width="10" height="10"><path d="M1 1l7 7M8 1L1 8" stroke="#555" strokeWidth="1.500" /></svg>
        </button>
      </div>
      <div className="flex min-h-0 flex-1 flex-col border-r border-b border-[#7e8593] bg-[#e4e8f0] px-[2px] pt-[2px] pb-[2px]">
        <div className="flex min-h-0 flex-1 flex-col border-t border-l border-[#777] bg-[#fcfbf1]">
          <div className="flex min-h-0 flex-1">
            <ul className="min-w-0 flex-1 overflow-hidden pl-[3px]">
              {rows.map((row, i) => <TreeRow key={i} row={row} />)}
            </ul>
            <div className="flex w-[17px] flex-col items-center bg-[#f0f0f0]">
              <Arrow dir="up" />
              <div className="mt-2 h-[190px] w-[15px] bg-[#cdcdcd]" />
              <div className="flex-1" />
              <Arrow dir="down" />
            </div>
          </div>
          <div className="flex h-[17px] shrink-0 items-center bg-[#f0f0f0]">
            <Arrow dir="left" />
            <div className="h-[15px] w-[189px] bg-[#cdcdcd]" />
            <div className="flex-1" />
            <Arrow dir="right" />
            <div className="w-[17px]" />
          </div>
        </div>
      </div>
      <div role="tablist" className="flex h-[23px] shrink-0 items-start gap-2 pl-1 text-[12px] text-[#55585f]">
        <button role="tab" aria-selected="true" className="flex h-[21px] items-end rounded-b border border-t-0 border-white bg-[#e9edf5] pr-[2px]">
          <Icon name="tabData" />Dados
        </button>
        <button role="tab" className="flex h-[21px] items-end"><Icon name="tabShow" />Mostrar</button>
        <button role="tab" className="ml-1 flex h-[21px] items-end"><Icon name="tabViews" />Vistas</button>
      </div>
    </aside>
  );
}

/* ---------- parallel projection, metres to pixels ---------- */

type Vec = [number, number];
type Camera = { o: Vec; u: Vec; v: Vec; h: number; w: number; d: number };

const at = (c: Camera, x: number, y: number, z = 0): Vec => [
  c.o[0] + x * c.u[0] + y * c.v[0],
  c.o[1] + x * c.u[1] + y * c.v[1] - z * c.h,
];
const poly = (c: Camera, pts: number[][]) => pts.map(([x, y, z]) => at(c, x, y, z).join(',')).join(' ');

function Ground({ cam }: { cam: Camera }) {
  let dots = '';
  for (let i = -30; i <= 30; i++) {
    for (let j = -30; j <= 30; j++) {
      const [x, y] = at(cam, i, j).map(Math.round);
      if (x >= 0 && y >= 0 && x < cam.w && y < cam.d) dots += `M${x} ${y}h1v1h-1z`;
    }
  }
  const lines = [-30, -20, -10, 0, 10, 20, 30];
  const seg = (a: Vec, b: Vec) => `M${a.join(' ')}L${b.join(' ')}`;
  return (
    <>
      <polygon points={poly(cam, [[-30, -30, 0], [30, -30, 0], [30, 30, 0], [-30, 30, 0]])} fill="#fcfcfc" />
      {lines.map((k) => (
        <g key={k} stroke={k === 0 ? '#1b8a8a' : '#c9c9c9'} strokeWidth={k === 0 ? 1.3 : 1.2}>
          <path d={seg(at(cam, k, -30), at(cam, k, 30))} />
          <path d={seg(at(cam, -30, k), at(cam, 30, k))} />
        </g>
      ))}
      <path d={dots} fill="#111" shapeRendering="crispEdges" />
    </>
  );
}

const sceneCam: Camera = { o: [496.3, 311.6], u: [23.74, 9.63], v: [28.3, -8.13], h: 35, w: 1400, d: 700 };

// bounding box corner marks, in thirds of a pixel
const corners = [
  'M475 293L530 278L620 314M530 278V344', 'M140 389L89 403L177 440M89 403V470', 'M1168 537L1256 572L1200 588M1256 572V638',
  'M727 663L815 699L867 684M815 699V764', 'M475 836L530 821L620 857M530 821V754', 'M140 931L89 946L177 982M89 946V880',
  'M1168 1079L1256 1114L1203 1130M1256 1114V1048', 'M724 1204L815 1240L869 1225M815 1240V1173',
];

function Scene() {
  const c = sceneCam;
  const line = (a: Vec, b: Vec) => `M${a.join(' ')}L${b.join(' ')}`;
  return (
    <svg className="block h-full w-full" aria-label="Vista do modelo">
      <Ground cam={c} />
      <polygon points="496,136.500 639,97.500 875.500,192 875.500,367.500 733.700,408 496,311.500" fill="#fff" />
      <path d={line(at(c, 0, 0), at(c, 10, 0))} stroke="#7fbcbc" strokeWidth="1.200" />
      <path d={line(at(c, 10, 0), at(c, 10, 5))} stroke="#ddd" />
      <polygon points="496,136.500 639,97.500 875,192 733.700,233" fill="#444" />
      <polygon points="496.300,67.300 733.700,163.700 733.700,233 496.300,136.500" fill="#bcbcbc" fillOpacity="0.500" />
      <polygon points="496.300,67.300 581.300,8.300 818.700,105 733.700,163.700" fill="#8d8d8d" fillOpacity="0.740" />
      <path d="M581.300 8.300L818.700 105L733.700 163.700V233M581.300 8.300L496.300 67.300L733.700 163.700M496.300 67.300V136.500" stroke="#111" strokeWidth="1.200" fill="none" />
      {[0, 1, 2, 3, 4, 5].map((i) => (
        <g key={i} transform={`translate(${513.7 + i * 39.6} ${146.5 + i * 16})`} fill="#7dfb7d">
          <ellipse cx="0" cy="0" rx="6" ry="2.500" />
          <path d="M-2 0h6v4h-6z" />
        </g>
      ))}
      <path d="M496 137L733 233" stroke="#3fc43f" strokeWidth="1.300" strokeDasharray="3 1" />
      <g fill="#8c0000">
        {[[496, 67], [581, 8], [819, 105], [734, 164], [734, 233], [496, 137]].map(([x, y]) => (
          <rect key={x * 1000 + y} x={x - 1.5} y={y - 1.5} width="3.500" height="3.500" />
        ))}
      </g>
      <g transform="translate(462 -1) scale(0.33333)" stroke="#f00" strokeWidth="3" fill="none">
        {corners.map((d) => <path key={d} d={d} />)}
      </g>
      <path d="M496 312L474 318" stroke="#0f0" strokeWidth="2" />
      <path d="M465 320.500l8-5l2 5z" fill="#00a000" />
      <path d="M496 312L517 320" stroke="#f00" strokeWidth="2" />
      <path d="M523 322l-9-1l3-5z" fill="#b00000" />
      <path d="M496.500 312v30" stroke="#00f" strokeWidth="1.500" />
      <path d="M493.500 340h6l-3 10z" fill="#0000a0" />
      <g fontFamily="'Liberation Sans', sans-serif" fontSize="9">
        <text x="455" y="326" fill="#00d000">Y</text>
        <text x="526" y="328" fill="#f00">X</text>
        <text x="493" y="362" fill="#00f">Z</text>
      </g>
    </svg>
  );
}

const previewCam: Camera = { o: [18.7, 285.4], u: [25.93, 3.83], v: [15, -6.7], h: 29, w: 372, d: 430 };

function Preview() {
  const c = previewCam;
  const marks = [
    [0, 0, 5], [0, 5, 5], [10, 5, 5], [10, 0, 5], [10, 0, 0], [10, 5, 0], [0, 5, 0],
    [5, 2.5, 5], [5, 2.5, 0], [5, 2.5, 2.5], [0, 2.5, 2.5], [10, 2.5, 2.5], [5, 0, 2.5], [5, 5, 2.5],
  ];
  const edge = (a: number[], b: number[]) => `M${at(c, a[0], a[1], a[2]).join(' ')}L${at(c, b[0], b[1], b[2]).join(' ')}`;
  return (
    <svg className="block h-full w-full" aria-label="Pré-visualização do objeto">
      <Ground cam={c} />
      <polygon points={poly(c, [[0, 0, 0], [10, 0, 0], [10, 0, 5], [0, 0, 5]])} fill="#f8f8f8" />
      <polygon points={poly(c, [[10, 0, 0], [10, 5, 0], [10, 5, 5], [10, 0, 5]])} fill="#f1f1f1" />
      <polygon points={poly(c, [[0, 0, 5], [10, 0, 5], [10, 5, 5], [0, 5, 5]])} fill="#3b3b3b" />
      <path d={edge([10, 0, 0], [10, 0, 5])} stroke="#8a8a8a" strokeWidth="1.500" strokeDasharray="13 3" />
      <path d={edge([0, 0, 0], [0, 0, 5]) + edge([10, 5, 0], [10, 5, 5])} stroke="#b5b5b5" strokeDasharray="13 3" />
      <path d={edge([0, 0, 0], [10, 0, 0])} stroke="#b4bebe" strokeWidth="1.500" />
      <path d={edge([10, 0, 0], [10, 5, 0])} stroke="#aaa" strokeDasharray="2 1" />
      {marks.map(([x, y, z], i) => {
        const [px, py] = at(c, x, y, z);
        return <circle key={i} cx={px} cy={py} r="2.400" fill="#ff1a1a" />;
      })}
      <path d="M18.700 285.400L4 290" stroke="#0e0" strokeWidth="1.500" />
      <path d="M0 291l6-3v6l-6-1z" fill="#00a000" />
      <path d="M19 285.500l27 4" stroke="#e00" strokeWidth="1.500" />
      <path d="M54 290.500l-9 2v-6z" fill="#b00000" />
      <path d="M19 286v30" stroke="#00f" strokeWidth="2" />
      <path d="M16 314h6l-3 10z" fill="#0000a0" />
      <circle cx="18.700" cy="285.400" r="2.200" fill="#ff0" />
      <g fontFamily="'Liberation Sans', sans-serif" fontSize="10">
        <text x="59" y="295" fill="#f00">X</text>
        <text x="16" y="337" fill="#00f">Z</text>
      </g>
      <rect x="9.500" y="269.500" width="21" height="36" stroke="#e8433c" strokeWidth="3" fill="none" />
    </svg>
  );
}

/* ---------- dialog ---------- */

function Group({ title, className = '', children }: { title: string; className?: string; children: ReactNode }) {
  return (
    <fieldset
      aria-label={title}
      className={`min-w-0 border-r border-b border-[#a8a8e8] bg-[#f0f4fa] [clip-path:polygon(0_0,calc(100%-10px)_0,100%_10px,100%_100%,0_100%)] ${className}`}
    >
      <div className="h-[17px] border-b border-white bg-[#dbe5f5] pl-[2px] leading-4 text-[#1f4572]">{title}</div>
      {children}
    </fieldset>
  );
}

function Spinner({ id, value, wide, disabled }: { id: string; value: string; wide?: boolean; disabled?: boolean }) {
  const [text, setText] = useState(value);
  const key = 'flex items-center justify-center border border-[#b5b5b5] bg-[#ececec]';
  return (
    <span
      className={`flex h-5 items-stretch border border-[#7f9db9] p-px ${wide ? 'w-[85px]' : 'w-[83px]'} ${disabled ? 'bg-[#f0f0f0] text-[#888]' : 'bg-white'}`}
    >
      <input
        id={id}
        value={text}
        disabled={disabled}
        onChange={(e) => setText(e.target.value)}
        className="w-0 min-w-0 flex-1 pr-[2px] text-right outline-none"
      />
      <span className="flex w-[13px] flex-col">
        <button aria-label="Mais" disabled={disabled} className={`${key} flex-1`}>
          <svg width="5" height="3"><path d="M0 3h5L2.500 0z" fill="currentColor" /></svg>
        </button>
        <button aria-label="Menos" disabled={disabled} className={`${key} flex-1`}>
          <svg width="5" height="3"><path d="M0 0h5L2.500 3z" fill="currentColor" /></svg>
        </button>
      </span>
      <button aria-label="Escolher" disabled={disabled} className={`${key} ml-px w-[9px]`}>
        <svg width="3" height="5"><path d="M0 0v5l3-2.500z" fill="currentColor" /></svg>
      </button>
    </span>
  );
}

function Field({ id, name, unit, value, wide, disabled }: { id: string; name: string; unit: string; value: string; wide?: boolean; disabled?: boolean }) {
  return (
    <div className="flex items-center">
      <label htmlFor={id} className="w-[21px]">{name}</label>
      <Spinner id={id} value={value} wide={wide} disabled={disabled} />
      <span className={wide ? 'ml-[3px]' : 'ml-[5px]'}>{unit}</span>
    </div>
  );
}

function SmallButton({ icon, className = '' }: { icon: string; className?: string }) {
  return (
    <button aria-label={icon} className={`flex h-[21px] w-[25px] shrink-0 items-center justify-center border border-[#adadad] bg-[#e1e1e1] ${className}`}>
      <Icon name={icon} size={17} />
    </button>
  );
}

const radio =
  'h-[13px] w-[13px] appearance-none rounded-full border border-[#333] bg-white checked:bg-[#333] checked:shadow-[inset_0_0_0_2px_#fff]';

function Dialog() {
  const [scale, setScale] = useState('abs');
  return (
    <section
      role="dialog"
      aria-label="Novo objeto visual"
      className="absolute top-[164px] left-[131px] w-[700px] border border-[#6d6d6d] bg-[#f0f0f0] font-['Liberation_Sans',Arial,sans-serif] text-[11px] text-black shadow-[3px_5px_14px_rgba(0,0,0,0.45)]"
    >
      <header className="flex h-[25px] items-center justify-between bg-white pr-[9px] pb-[2px] pl-[3px] font-['Roboto',sans-serif] text-[12px]">
        Novo objeto visual
        <button aria-label="Fechar">
          <svg width="12" height="12"><path d="M1 1l10 10M11 1L1 11" stroke="#111" strokeWidth="1.200" /></svg>
        </button>
      </header>

      <div className="mr-[9px] ml-2 flex gap-[7px] border-b border-[#a0a0a0] pt-2 pb-2">
        <div className="flex w-[300px] shrink-0 flex-col gap-[10px]">
          <div className="-mb-px flex gap-2">
            <Group title="Nº" className="w-[52px]">
              <div className="px-[3px] pt-[3px] pb-[5px]">
                <input aria-label="Nº" readOnly value="1" className="block h-5 w-full border border-[#7a7a7a] bg-[#f0f0f0] px-px" />
              </div>
            </Group>
            <Group title="Designação" className="flex-1">
              <div className="px-[3px] pt-[3px] pb-[5px]">
                <input aria-label="Designação" className="block h-5 w-full border border-[#7a7a7a] bg-white px-[2px]" />
              </div>
            </Group>
          </div>

          <Group title="Nome do ficheiro (.3ds)">
            <div className="flex items-center gap-1 px-[3px] pt-[3px] pb-[4px]">
              <input aria-label="Nome do ficheiro" readOnly value="10x5x5_container.3ds" className="h-5 min-w-0 flex-1 border border-[#7a7a7a] bg-[#f0f0f0] px-[3px]" />
              <SmallButton icon="find" />
            </div>
          </Group>

          <Group title="Posição">
            <div className="flex items-start pt-[5px] pb-2 pl-[3px]">
              <div className="flex w-[151px] flex-col gap-[3px]">
                <Field id="px" name="X:" unit="[m]" value="0.000" wide />
                <Field id="py" name="Y:" unit="[m]" value="0.000" wide />
                <Field id="pz" name="Z:" unit="[m]" value="0.000" wide />
              </div>
              <SmallButton icon="pick" />
            </div>
          </Group>

          <Group title="Rotação">
            <div className="flex items-start pt-[5px] pb-[11px] pl-[3px]">
              <div className="w-[135px]">
                <label htmlFor="seq" className="block h-4 leading-4">Sequência:</label>
                <span className="relative mt-[3px] block h-[21px] w-[54px]">
                  <select id="seq" className="h-full w-full appearance-none border border-[#adadad] bg-[#e1e1e1] pl-[6px]">
                    <option>ZYX</option>
                  </select>
                  <svg width="9" height="6" className="pointer-events-none absolute top-2 right-1"><path d="M1 1l3.500 3.500L8 1" stroke="#444" fill="none" /></svg>
                </span>
              </div>
              <div className="flex flex-col gap-[2px]">
                <span className="mb-px h-4 leading-4">Rodado em torno de</span>
                <Field id="rz" name="Z:" unit="[°]" value="0.00" />
                <Field id="ry" name="Y:" unit="[°]" value="0.00" />
                <Field id="rx" name="X:" unit="[°]" value="0.00" />
              </div>
            </div>
          </Group>

          <Group title="Escala">
            <div className="flex items-start pt-[5px] pb-[6px] pl-[3px]">
              <div className="w-[135px]">
                <label className="flex h-4 items-center gap-[3px]">
                  <input type="radio" name="scale" checked={scale === 'rel'} onChange={() => setScale('rel')} className={radio} />
                  Relativo
                </label>
                <label className="mt-1 flex h-4 items-center gap-[3px]">
                  <input type="radio" name="scale" checked={scale === 'abs'} onChange={() => setScale('abs')} className={radio} />
                  Absoluto
                </label>
                <label htmlFor="max" className="mt-3 block h-4 leading-4">Tamanho máx.:</label>
                <div className="mt-[3px] flex items-center gap-1 pl-px">
                  <Spinner id="max" value="10.000" />
                  [m]
                </div>
              </div>
              <div className="flex flex-col gap-[2px]">
                <label className="mb-1 flex h-4 items-center gap-[3px]">
                  <input type="checkbox" className="h-[13px] w-[13px] appearance-none border border-[#333] bg-white checked:bg-[#333]" />
                  Não-uniforme:
                </label>
                <Field id="sx" name="X:" unit="[m]" value="" disabled />
                <Field id="sy" name="Y:" unit="[m]" value="" disabled />
                <Field id="sz" name="Z:" unit="[m]" value="" disabled />
              </div>
            </div>
          </Group>
        </div>

        <div className="flex min-w-0 flex-1 flex-col border-r border-b border-[#a8a8e8] bg-[#f0f4fa]">
          <div className="min-h-0 flex-1 overflow-hidden border-t border-l border-[#8a8a8a] bg-white">
            <Preview />
          </div>
          <div className="flex h-[30px] shrink-0 items-center gap-[5px] pr-[2px] pl-1">
            <SmallButton icon="origin" className="mr-auto" />
            <SmallButton icon="ax" />
            <SmallButton icon="ay2" />
            <SmallButton icon="az" />
            <SmallButton icon="box" />
            <SmallButton icon="zoomAll" className="ml-1" />
          </div>
        </div>
      </div>

      <footer className="flex items-center pt-[11px] pr-[9px] pb-[9px] pl-[9px]">
        <SmallButton icon="help" />
        <SmallButton icon="comment" className="ml-[6px]" />
        <button className="ml-auto h-[21px] w-[73px] border-2 border-[#0078d7] bg-[#e1e1e1]">OK</button>
        <button className="ml-[9px] h-[21px] w-[73px] border border-[#adadad] bg-[#e1e1e1]">Cancelar</button>
      </footer>

      {/* highlight frame round the size setting */}
      <div className="pointer-events-none absolute top-[417px] left-1 h-[80px] w-[119px] border-3 border-[#c00000]" />
    </section>
  );
}

/* ---------- node table ---------- */

const nodes = [
  ['0.000', '0.000', '-5.000'],
  ['10.000', '0.000', '-5.000'],
  ['0.000', '0.000', '-7.000'],
  ['10.000', '0.000', '-7.000'],
  ['0.000', '-3.000', '-8.000'],
  ['10.000', '-3.000', '-8.000'],
];

const tableTabs = [
  'Nós', 'Linhas', 'Materiais', 'Superfícies', 'Sólidos', 'Aberturas', 'Apoios nodais', 'Apoios em linha',
  'Apoios elásticos de superfícies', 'Articulações de linha', 'Secções', 'Articulações de barras',
  'Excentricidades das barras', 'Divisões de barras', 'Barras', 'Apoios elásticos de barras',
];

function NodeTable() {
  const cell = 'h-4 border-r border-b border-[#a0a0a0] p-0 font-normal';
  const raised = 'border-r border-b border-[#696969] bg-[#e1e1e1] p-0 font-normal shadow-[inset_1px_1px_0_#fff]';
  return (
    <table className="w-[1519px] table-fixed border-separate border-spacing-0 border-t border-l border-[#696969]">
      <colgroup>
        <col className="w-[45px]" />
        <col className="w-[84px]" />
        <col className="w-[72px]" />
        <col className="w-[90px]" />
        <col className="w-[78px]" />
        <col className="w-[78px]" />
        <col className="w-[78px]" />
        <col />
      </colgroup>
      <thead className="text-center">
        <tr className="h-[14px] leading-[13px]">
          <th rowSpan={3} className="border-r border-b border-[#696969] bg-[#f0f0f0] p-0 pb-[6px] align-bottom font-normal">
            Nó<br />nº
          </th>
          {['A', 'B', 'C', 'D', 'E', 'F', 'G'].map((c) => (
            <th key={c} className={c === 'A' ? 'border-r border-b border-[#696969] bg-[#3399ff] p-0 font-normal text-white' : raised}>{c}</th>
          ))}
        </tr>
        <tr className="h-4 bg-[#f0f0f0] align-top leading-[14px]">
          <th className="border-r border-[#a0a0a0] p-0" />
          <th className="border-r border-[#a0a0a0] p-0 font-normal">Nó de</th>
          <th className="border-r border-[#a0a0a0] p-0 font-normal">Sistema de</th>
          <th colSpan={3} className="border-r border-[#a0a0a0] p-0 font-normal">Coordenadas do nó</th>
          <th className="p-0" />
        </tr>
        <tr className="h-[17px] bg-[#f0f0f0] align-top leading-[14px]">
          {['Tipo de nó', 'referência', 'coordenadas', 'X [m]', 'Y [m]', 'Z [m]', 'Comentário'].map((h) => (
            <th key={h} className={cell}>{h}</th>
          ))}
        </tr>
      </thead>
      <tbody className="leading-[14px]">
        {Array.from({ length: 10 }, (_, i) => {
          const n = nodes[i];
          return (
            <tr key={i} className="bg-white align-bottom">
              <th className={i === 0 ? 'h-4 border-r border-b border-[#696969] bg-[#3399ff] p-0 align-top font-normal text-white' : `h-4 align-top ${raised}`}>{i + 1}</th>
              <td className={`${cell} pl-1 ${i === 0 ? 'outline-1 -outline-offset-1 outline-black outline-dotted' : ''}`}>{n && 'Padrão'}</td>
              <td className={`${cell} text-center`}>{n && '0'}</td>
              <td className={`${cell} pl-[3px]`}>{n && <><span className="underline">C</span>artesiano</>}</td>
              <td className={`${cell} pr-1 text-right`}>{n?.[0]}</td>
              <td className={`${cell} pr-1 text-right`}>{n?.[1]}</td>
              <td className={`${cell} pr-1 text-right`}>{n?.[2]}</td>
              <td className={`${cell} ${n ? '' : 'bg-[#f0f0f0]'}`} />
            </tr>
          );
        })}
      </tbody>
    </table>
  );
}

function TablePanel() {
  const [tab, setTab] = useState('Nós');
  return (
    <section className="shrink-0">
      <h2 className="mt-[6px] h-[19px] border-t border-[#e8ebf2] bg-[#b9c0cb] pl-1 leading-[18px] text-[#3c3c44]">1.1 Nós</h2>
      <div className="flex h-[26px] items-center bg-linear-to-b from-[#e9edf6] to-[#d3d7e2] pb-px pl-2">
        <Tools items={tableBar} />
      </div>
      <div className="overflow-hidden border-t-2 border-l border-[#696969] bg-[#f0f0f0] pt-px pl-px font-['Liberation_Sans',Arial,sans-serif] text-[11px] text-black">
        <NodeTable />
        <div role="tablist" className="mt-[10px] flex border-t-2 border-[#808080] pb-[18px] whitespace-nowrap">
          {tableTabs.map((t) => (
            <button
              key={t}
              role="tab"
              aria-selected={t === tab}
              onClick={() => setTab(t)}
              className={`h-4 shrink-0 rounded-b border-r border-b border-[#696969] px-[3px] ${t === tab ? '-mt-[2px] h-[18px] bg-[#f0f0f0] pl-[2px]' : 'bg-[#e3e3e3]'}`}
            >
              {t}
            </button>
          ))}
        </div>
      </div>
    </section>
  );
}

/* ---------- status bar ---------- */

function StatusBar() {
  const cells: [string, boolean][] = [
    ['AJUSTAR', true], ['GRELHA', true], ['CARTES', true], ['AJUST. OBJ.', false], ['LINHAS AUX.', true], ['DXF', true],
  ];
  return (
    <footer className="flex h-[22px] shrink-0 items-stretch justify-end gap-[3px] border-t border-[#9aa0ac] bg-linear-to-b from-[#dfe2e8] via-[#abb0bc] to-[#b9bfca] pt-[2px] text-[12px] text-[#2b2e36]">
      {cells.map(([t, on]) => (
        <button
          key={t}
          className={`border px-px pb-px ${on ? 'border-t-black border-r-white border-b-white border-l-black' : 'border-t-white border-r-[#999] border-b-[#999] border-l-white pb-[3px]'}`}
        >
          {t}
        </button>
      ))}
      <div className="flex w-[255px]">
        <span className="w-[189px] border-r border-l border-[#8d929e]" />
      </div>
    </footer>
  );
}

export default function App() {
  return (
    <div className="relative flex h-screen flex-col overflow-hidden bg-[#cfd3dc] font-['Open_Sans','Noto_Sans',sans-serif] text-[11px] leading-4 text-black">
      <header className="flex h-[23px] shrink-0 items-center gap-1 bg-white pl-[2px] text-[#8c8c8c]">
        <svg width="17" height="17" viewBox="0 0 18 18" fill="none" aria-hidden="true">
          {s('M4 5l6-4l6 3v7l-6 5z', '#333b50', 1, '#66789c')}
          {s('M7 4l6 3M9 2l6 3M10 8v7', '#a9b8d4')}
          <text x="0" y="16" fontSize="13" fontWeight="bold" fill="#f0c010" stroke="#5a4500" strokeWidth="0.500" fontFamily="'Liberation Sans', sans-serif">5</text>
        </svg>
        <h1>RFEM 5.23.01 x64- [200807_rwindvis*]</h1>
      </header>

      <nav className="flex h-6 shrink-0 items-center pl-1 text-[#44474f]">
        <span className="mr-1 h-3 w-[2px] border-l-2 border-dotted border-[#9aa1b0]" />
        <svg width="16" height="13" className="mr-[10px]" aria-hidden="true">
          <rect width="16" height="13" fill="#182059" />
          <path d="M0 8.500h16M2 8l5-5l2 0l5 5M8 2v11M5 5v7M11 5v7" stroke="#fff" fill="none" />
        </svg>
        <div className="flex gap-[15px]">
          {menus.map(([t, k]) => (
            <button key={t}>
              {t.slice(0, k)}<span className="underline underline-offset-2">{t[k]}</span>{t.slice(k + 1)}
            </button>
          ))}
        </div>
      </nav>

      <div className="flex shrink-0">
        <Bar>
          <Tools items={mainBarA} />
          <span className="relative mr-[2px] block h-[19px] w-[218px]">
            <select aria-label="Caso de carga" className="h-full w-full appearance-none bg-white pl-[4px] text-black">
              <option>CC1</option>
            </select>
            <span className="pointer-events-none absolute top-px right-px flex h-[17px] w-[14px] items-center justify-center bg-[#dde1ea]">
              <svg width="6" height="4"><path d="M0 0h6L3 4z" fill="#666" /></svg>
            </span>
          </span>
          <Tools items={mainBarB} />
        </Bar>
        <Bar><Tools items={mainBarC} /></Bar>
        <Bar><Tools items={mainBarD} /></Bar>
      </div>
      <div className="mb-px flex shrink-0">
        <Bar><Tools items={secondBarA} /></Bar>
        <Bar><Tools items={secondBarB} /></Bar>
        <Bar><Tools items={secondBarC} /></Bar>
      </div>

      <main className="flex min-h-0 flex-1">
        <Navigator />
        <div className="ml-[6px] flex min-w-0 flex-1 flex-col">
          <div className="min-h-0 flex-1 border-t border-l border-[#6d6d6d] bg-white">
            <Scene />
          </div>
          <TablePanel />
        </div>
      </main>

      <StatusBar />
      <Dialog />
    </div>
  );
}
